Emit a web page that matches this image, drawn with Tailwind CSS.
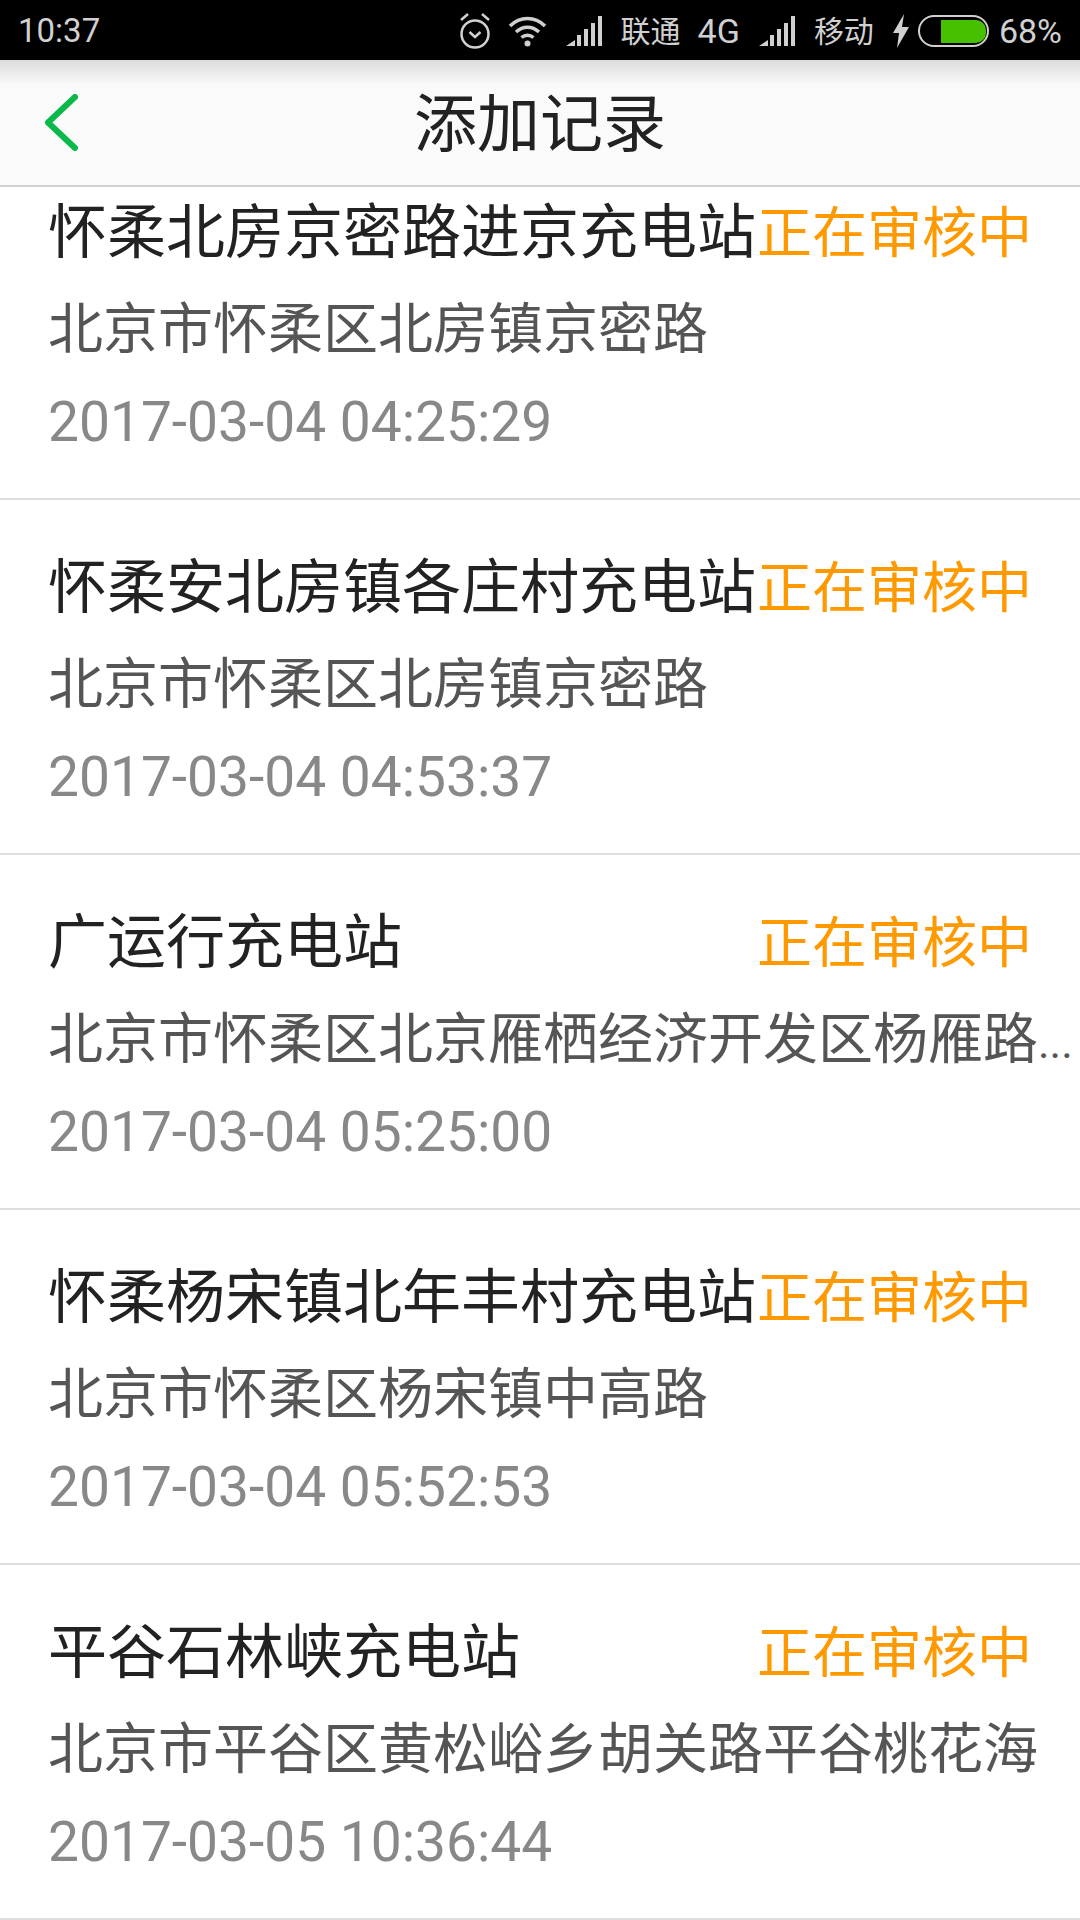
<!DOCTYPE html>
<html lang="zh-CN">
<head>
  <meta charset="UTF-8" />
  <title>添加记录</title>
  <script src="https://cdn.jsdelivr.net/npm/@tailwindcss/browser@4"></script>
</head>
<body class="bg-white font-['Roboto','Noto_Sans_CJK_SC',sans-serif]">
  <div class="w-[1080px] h-[1920px] overflow-hidden flex flex-col">
    <!-- status bar -->
    <div class="h-[60px] shrink-0 bg-black text-[#d0d0d0] flex items-center text-[33px] pl-[18px] pr-[18px] pt-[2px]">
      <span>10:37</span>
      <div class="ml-auto flex items-center text-[34px]">
        <svg class="w-[32px] h-[40px]" viewBox="0 0 32 40" fill="none" stroke="#d0d0d0" stroke-width="2.5"><circle cx="16" cy="23" r="13.500"/><path d="M10.500 21l5.500 5 5.500-5M2 9l7-6M30 9l-7-6"/></svg>
        <svg class="w-[39px] h-[32px] ml-[17px]" viewBox="0 0 39 32" fill="none" stroke="#d0d0d0" stroke-width="3.500"><path d="M2 11c10-10 25-10 35 0M8 17c7-6.500 16-6.500 23 0M13.500 22.500c3.500-3 8.500-3 12 0"/><circle cx="19.500" cy="28.500" r="3" fill="#d0d0d0" stroke="none"/></svg>
        <svg class="w-[36px] h-[30px] ml-[19px]" viewBox="0 0 36 30" fill="#d0d0d0"><path d="M0 30l9-6v6zM11 30v-11h4v11zM18 30v-17h4v17zM25 30v-23h4v23zM32 30v-30h4v30z"/></svg>
        <span class="ml-[19px] text-[30px]">联通</span>
        <span class="ml-[17px]">4G</span>
        <svg class="w-[36px] h-[30px] ml-[19px]" viewBox="0 0 36 30" fill="#d0d0d0"><path d="M0 30l9-6v6zM11 30v-11h4v11zM18 30v-17h4v17zM25 30v-23h4v23zM32 30v-30h4v30z"/></svg>
        <span class="ml-[19px] text-[30px]">移动</span>
        <svg class="w-[16px] h-[34px] ml-[19px]" viewBox="0 0 16 34" fill="#d0d0d0"><path d="M11 0L0 19h6L4 34l12-21H9z"/></svg>
        <div class="ml-[9px] w-[71px] h-[32px] rounded-[16px] border-2 border-[#d0d0d0] flex justify-end items-center pr-[1px]">
          <div class="w-[45px] h-[23px] bg-[#46c000] rounded-r-[10px]"></div>
        </div>
        <span class="ml-[10px]">68%</span>
      </div>
    </div>

    <!-- nav -->
    <div class="relative z-10 h-[127px] shrink-0 bg-gradient-to-b from-[#dcdcdc] from-0% via-[#fafafa] via-[20%] to-[#fbfbfb] border-b-2 border-[#cfcfcf] flex items-center justify-center pt-[4px]">
      <svg class="absolute left-[44px] top-[34px] w-[34px] h-[57px]" viewBox="0 0 34 57" fill="none" stroke="#0bb84a" stroke-width="6" stroke-linecap="round" stroke-linejoin="round"><path d="M31 3L4 28.500 31 54"/></svg>
      <h1 class="text-[63px] leading-none text-[#222]">添加记录</h1>
    </div>

    <!-- list -->
    <div class="flex-1 overflow-hidden">
      <div class="-mt-[42px]">
        <div class="h-[355px] border-b-2 border-[#dedede] pt-[41px] pl-[48px]">
          <div class="flex items-center h-[94px]"><span class="w-[709px] text-[59px] text-[#222] whitespace-nowrap">怀柔北房京密路进京充电站</span><span class="text-[55px] text-[#ff9900]">正在审核中</span></div>
          <div class="h-[95px] pt-[3px] flex items-center text-[55px] text-[#555] whitespace-nowrap">北京市怀柔区北房镇京密路</div>
          <div class="h-[94px] flex items-center text-[55.1px] text-[#888]">2017-03-04 04:25:29</div>
        </div>
        <div class="h-[355px] border-b-2 border-[#dedede] pt-[41px] pl-[48px]">
          <div class="flex items-center h-[94px]"><span class="w-[709px] text-[59px] text-[#222] whitespace-nowrap">怀柔安北房镇各庄村充电站</span><span class="text-[55px] text-[#ff9900]">正在审核中</span></div>
          <div class="h-[95px] pt-[3px] flex items-center text-[55px] text-[#555] whitespace-nowrap">北京市怀柔区北房镇京密路</div>
          <div class="h-[94px] flex items-center text-[55.1px] text-[#888]">2017-03-04 04:53:37</div>
        </div>
        <div class="h-[355px] border-b-2 border-[#dedede] pt-[41px] pl-[48px]">
          <div class="flex items-center h-[94px]"><span class="w-[709px] text-[59px] text-[#222] whitespace-nowrap">广运行充电站</span><span class="text-[55px] text-[#ff9900]">正在审核中</span></div>
          <div class="h-[95px] pt-[3px] flex items-center text-[55px] text-[#555] whitespace-nowrap"><div>北京市怀柔区北京雁栖经济开发区杨雁路<span class="text-[44px]">...</span></div></div>
          <div class="h-[94px] flex items-center text-[55.1px] text-[#888]">2017-03-04 05:25:00</div>
        </div>
        <div class="h-[355px] border-b-2 border-[#dedede] pt-[41px] pl-[48px]">
          <div class="flex items-center h-[94px]"><span class="w-[709px] text-[59px] text-[#222] whitespace-nowrap">怀柔杨宋镇北年丰村充电站</span><span class="text-[55px] text-[#ff9900]">正在审核中</span></div>
          <div class="h-[95px] pt-[3px] flex items-center text-[55px] text-[#555] whitespace-nowrap">北京市怀柔区杨宋镇中高路</div>
          <div class="h-[94px] flex items-center text-[55.1px] text-[#888]">2017-03-04 05:52:53</div>
        </div>
        <div class="h-[355px] border-b-2 border-[#dedede] pt-[41px] pl-[48px]">
          <div class="flex items-center h-[94px]"><span class="w-[709px] text-[59px] text-[#222] whitespace-nowrap">平谷石林峡充电站</span><span class="text-[55px] text-[#ff9900]">正在审核中</span></div>
          <div class="h-[95px] pt-[3px] flex items-center text-[55px] text-[#555] whitespace-nowrap">北京市平谷区黄松峪乡胡关路平谷桃花海</div>
          <div class="h-[94px] flex items-center text-[55.1px] text-[#888]">2017-03-05 10:36:44</div>
        </div>
      </div>
    </div>
  </div>
</body>
</html>
